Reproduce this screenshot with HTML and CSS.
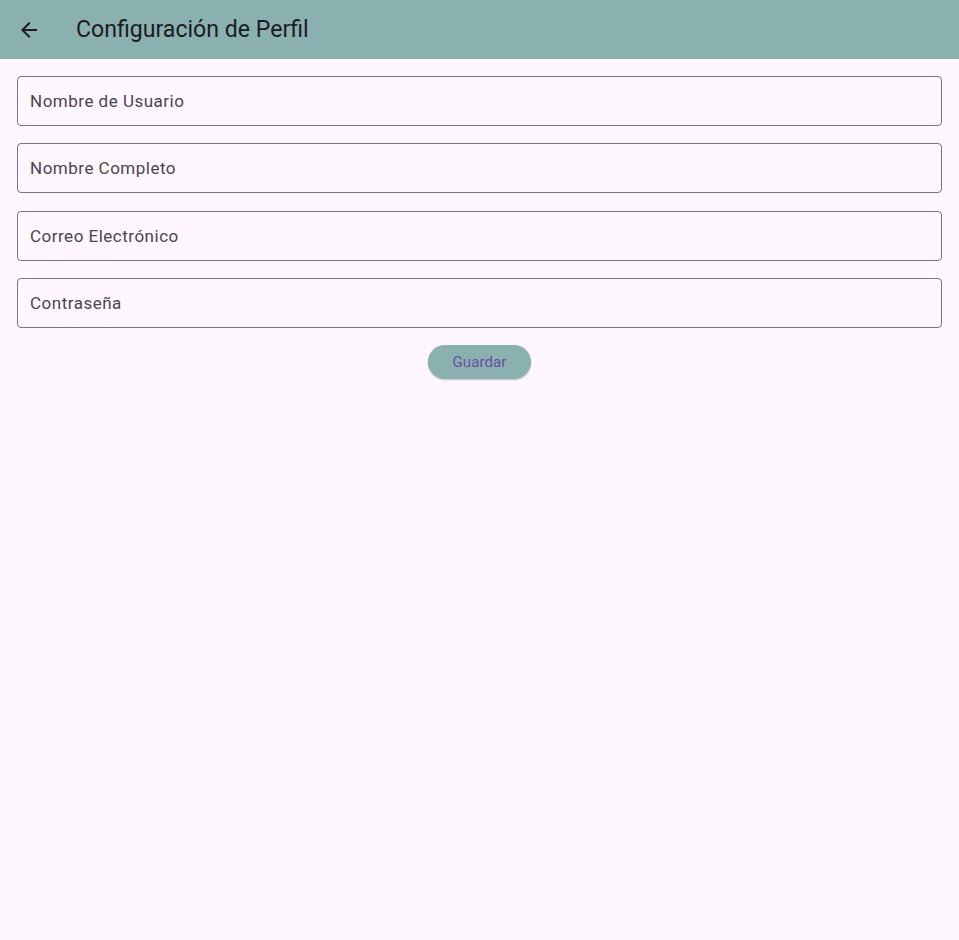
FILE: index.html
```html
<!DOCTYPE html>
<html lang="es">
<head>
<meta charset="utf-8">
<title>Configuración de Perfil</title>
<link rel="stylesheet" href="styles.css">
</head>
<body>
<header class="appbar">
  <button class="back" aria-label="Atrás">
    <svg width="24" height="24" viewBox="0 0 24 24"><path d="M20 11H7.83l5.59-5.59L12 4l-8 8 8 8 1.41-1.41L7.83 13H20v-2z" fill="#1d1b20"/></svg>
  </button>
  <h1 class="title">Configuración de Perfil</h1>
</header>
<main class="content">
  <div class="field"><span class="label">Nombre de Usuario</span></div>
  <div class="field"><span class="label">Nombre Completo</span></div>
  <div class="field"><span class="label">Correo Electrónico</span></div>
  <div class="field"><span class="label">Contraseña</span></div>
  <div class="actions"><button class="save">Guardar</button></div>
</main>
</body>
</html>
```
FILE: styles.css
```css
* { box-sizing: border-box; }
html, body { margin: 0; padding: 0; }
body {
  background: #fef7ff;
  font-family: Roboto, "Noto Sans", sans-serif;
  width: 959px;
  height: 940px;
}
.appbar {
  height: 59px;
  background: #8ab0b0;
  display: flex;
  align-items: center;
  padding-left: 17px;
}
.back {
  width: 24px; height: 24px;
  padding: 0; border: 0; background: none;
  display: flex; align-items: center; justify-content: center;
  margin-right: 35px;
}
.title {
  margin: 0;
  font-size: 23.1px;
  font-weight: 400;
  color: #1d1b20;
  margin-top: -1px;
}
.content {
  padding: 17px 17px;
  display: flex;
  flex-direction: column;
  gap: 17.3px;
}
.field {
  height: 50px;
  border: 1px solid #79747e;
  border-radius: 4px;
  display: flex;
  align-items: center;
  padding-left: 12px;
}
.label {
  font-size: 17px;
  letter-spacing: 0.5px;
  color: #49454f;
}
.actions {
  display: flex;
  justify-content: center;
}
.save {
  width: 103px;
  height: 34px;
  border: 0;
  border-radius: 17px;
  background: #8ab0b0;
  color: #6750a4;
  font-family: Roboto, sans-serif;
  font-size: 15px;
  letter-spacing: 0.1px;
  font-weight: 400;
  box-shadow: 0 1px 2px rgba(0,0,0,0.25);
}
```
